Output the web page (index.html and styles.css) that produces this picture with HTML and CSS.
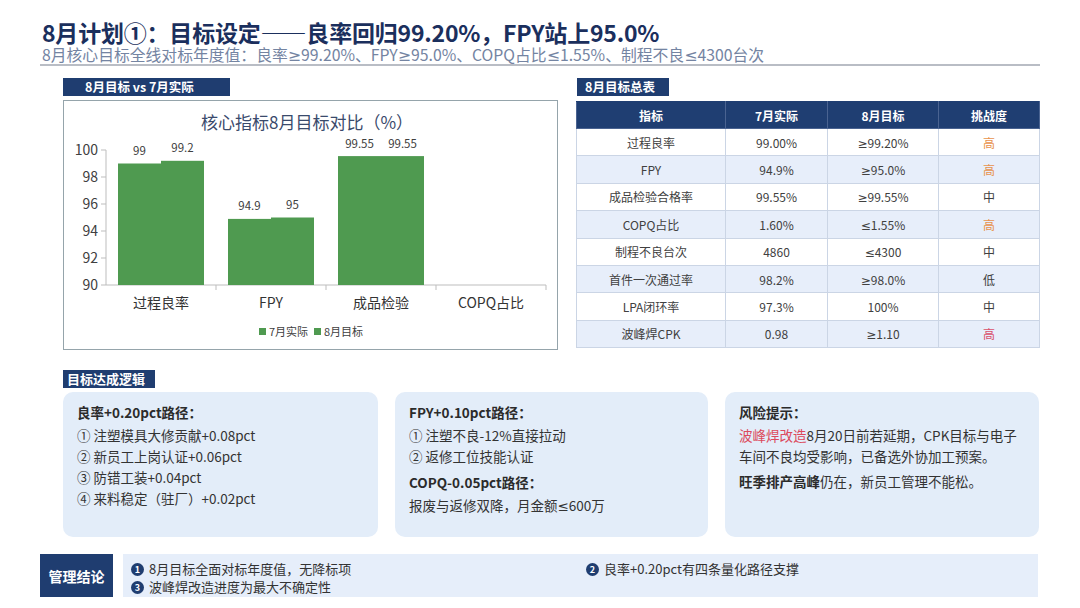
FILE: index.html
```html
<!DOCTYPE html>
<html lang="zh-CN">
<head>
<meta charset="utf-8">
<title>8月计划①：目标设定</title>
<link rel="stylesheet" href="styles.css">
</head>
<body>
<div class="page">
  <header class="header">
    <h1 class="title">8月计划①：目标设定——良率回归99.20%，FPY站上95.0%</h1>
    <p class="subtitle">8月核心目标全线对标年度值：良率<span class="op">≥</span>99.20%、FPY<span class="op">≥</span>95.0%、COPQ占比<span class="op">≤</span>1.55%、制程不良<span class="op">≤</span>4300台次</p>
  </header>

  <section class="top">
    <div class="col">
      <div class="tag tag-chart">8月目标 vs 7月实际</div>
      <div class="chart-box">
        <svg class="chart" width="495" height="248" viewBox="0 0 495 248">
          <text class="c-title" x="243" y="28" text-anchor="middle">核心指标8月目标对比（%）</text>
          <g class="grid-axis">
            <line x1="42" y1="49" x2="42" y2="184"/>
            <line x1="37" y1="49" x2="42" y2="49"/>
            <line x1="37" y1="76" x2="42" y2="76"/>
            <line x1="37" y1="103" x2="42" y2="103"/>
            <line x1="37" y1="130" x2="42" y2="130"/>
            <line x1="37" y1="157" x2="42" y2="157"/>
            <line x1="37" y1="184" x2="42" y2="184"/>
            <line x1="42" y1="184" x2="482" y2="184"/>
            <line x1="152" y1="184" x2="152" y2="189"/>
            <line x1="262" y1="184" x2="262" y2="189"/>
            <line x1="372" y1="184" x2="372" y2="189"/>
            <line x1="482" y1="184" x2="482" y2="189"/>
          </g>
          <g class="y-labels" text-anchor="end">
            <text x="34" y="54">100</text>
            <text x="34" y="81">98</text>
            <text x="34" y="108">96</text>
            <text x="34" y="135">94</text>
            <text x="34" y="162">92</text>
            <text x="34" y="189">90</text>
          </g>
          <g class="bars">
            <rect x="54" y="62.5" width="43" height="121.5"/>
            <rect x="97" y="59.8" width="43" height="124.2"/>
            <rect x="164" y="117.9" width="43" height="66.1"/>
            <rect x="207" y="116.5" width="43" height="67.5"/>
            <rect x="274" y="55.1" width="43" height="128.9"/>
            <rect x="317" y="55.1" width="43" height="128.9"/>
          </g>
          <g class="d-labels" text-anchor="middle">
            <text x="75.5" y="54">99</text>
            <text x="118.5" y="51">99.2</text>
            <text x="185.5" y="109">94.9</text>
            <text x="228.5" y="108">95</text>
            <text x="295.5" y="47">99.55</text>
            <text x="338.5" y="47">99.55</text>
          </g>
          <g class="x-labels" text-anchor="middle">
            <text x="97" y="207">过程良率</text>
            <text x="207" y="207">FPY</text>
            <text x="317" y="207">成品检验</text>
            <text x="427" y="207">COPQ占比</text>
          </g>
          <g class="legend">
            <rect x="195" y="227" width="7" height="7"/>
            <text x="205" y="235">7月实际</text>
            <rect x="250" y="227" width="7" height="7"/>
            <text x="260" y="235">8月目标</text>
          </g>
        </svg>
      </div>
    </div>

    <div class="col">
      <div class="tag tag-table">8月目标总表</div>
      <table class="targets">
        <colgroup>
          <col class="w1"><col class="w2"><col class="w3"><col class="w4">
        </colgroup>
        <thead>
          <tr><th>指标</th><th>7月实际</th><th>8月目标</th><th>挑战度</th></tr>
        </thead>
        <tbody>
          <tr><td>过程良率</td><td>99.00%</td><td><span class="op">≥</span>99.20%</td><td class="hi">高</td></tr>
          <tr><td>FPY</td><td>94.9%</td><td><span class="op">≥</span>95.0%</td><td class="hi">高</td></tr>
          <tr><td>成品检验合格率</td><td>99.55%</td><td><span class="op">≥</span>99.55%</td><td>中</td></tr>
          <tr><td>COPQ占比</td><td>1.60%</td><td><span class="op">≤</span>1.55%</td><td class="hi">高</td></tr>
          <tr><td>制程不良台次</td><td>4860</td><td><span class="op">≤</span>4300</td><td>中</td></tr>
          <tr><td>首件一次通过率</td><td>98.2%</td><td><span class="op">≥</span>98.0%</td><td>低</td></tr>
          <tr><td>LPA闭环率</td><td>97.3%</td><td>100%</td><td>中</td></tr>
          <tr><td>波峰焊CPK</td><td>0.98</td><td><span class="op">≥</span>1.10</td><td class="hi-red">高</td></tr>
        </tbody>
      </table>
    </div>
  </section>

  <section class="logic">
    <div class="tag tag-logic">目标达成逻辑</div>
    <div class="cards">
      <div class="card">
        <p class="c-head">良率+0.20pct路径：</p>
        <p>① 注塑模具大修贡献+0.08pct</p>
        <p>② 新员工上岗认证+0.06pct</p>
        <p>③ 防错工装+0.04pct</p>
        <p>④ 来料稳定（驻厂）+0.02pct</p>
      </div>
      <div class="card">
        <p class="c-head">FPY+0.10pct路径：</p>
        <p>① 注塑不良-12%直接拉动</p>
        <p>② 返修工位技能认证</p>
        <p class="c-head c-head-2">COPQ-0.05pct路径：</p>
        <p>报废与返修双降，月金额<span class="op">≤</span>600万</p>
      </div>
      <div class="card">
        <p class="c-head">风险提示：</p>
        <p><span class="red">波峰焊改造</span>8月20日前若延期，CPK目标与电子车间不良均受影响，已备选外协加工预案。</p>
        <p class="gap"><b>旺季排产高峰</b>仍在，新员工管理不能松。</p>
      </div>
    </div>
  </section>

  <section class="conclusion">
    <div class="c-label">管理结论</div>
    <div class="c-strip">
      <div class="c-item"><span class="num">1</span>8月目标全面对标年度值，无降标项</div>
      <div class="c-item"><span class="num">2</span>良率+0.20pct有四条量化路径支撑</div>
      <div class="c-item"><span class="num">3</span>波峰焊改造进度为最大不确定性</div>
    </div>
  </section>
</div>
</body>
</html>
```

FILE: styles.css
```css
* { box-sizing: border-box; }

html, body {
  margin: 0;
  padding: 0;
  background: #ffffff;
}

body {
  width: 1080px;
  height: 608px;
  overflow: hidden;
  font-family: "Noto Sans CJK SC", "Noto Sans", sans-serif;
  color: #333333;
}

p { margin: 0; }

.op {
  font-family: "Noto Sans", "DejaVu Sans", sans-serif;
  line-height: 1;
}

.page {
  padding: 18px 40px 0 40px;
}

.header {
  border-bottom: 2px solid #b9bdc5;
}

.title {
  margin: 0 0 0 2px;
  font-size: 23px;
  line-height: 28px;
  height: 28px;
  font-weight: 700;
  color: #1b2f5d;
  letter-spacing: -0.2px;
}

.subtitle {
  margin: 0 0 0 2px;
  font-size: 15.8px;
  line-height: 18px;
  height: 18px;
  color: #7484a2;
}

.top {
  display: grid;
  grid-template-columns: 495px 463px;
  column-gap: 18px;
  margin: 12px 0 0 23px;
}

.tag {
  height: 18px;
  line-height: 18px;
  background: #1f3d70;
  color: #ffffff;
  font-weight: 700;
  font-size: 12.5px;
}

.tag-chart {
  width: 167px;
  padding-left: 22px;
}

.tag-table {
  width: 92px;
  padding-left: 8px;
  margin-left: 1px;
}

.tag-logic {
  width: 92px;
  padding-left: 4px;
  font-size: 13px;
}

.chart-box {
  margin-top: 4px;
  height: 250px;
  border: 1px solid #95a4ab;
}

.chart {
  display: block;
}

.c-title {
  font-size: 17px;
  fill: #3a4a6c;
}

.grid-axis line {
  stroke: #bdbdbd;
  stroke-width: 1;
}

.y-labels text {
  font-size: 14px;
  fill: #404040;
}

.bars rect {
  fill: #4f9a50;
}

.d-labels text {
  font-size: 11.5px;
  fill: #404040;
}

.x-labels text {
  font-size: 14px;
  fill: #333333;
}

.legend rect {
  fill: #4f9a50;
}

.legend text {
  font-size: 11px;
  fill: #404040;
}

.targets {
  margin-top: 5px;
  width: 463px;
  border-collapse: collapse;
  table-layout: fixed;
  font-size: 12px;
}

.w1 { width: 149px; }
.w2 { width: 102px; }
.w3 { width: 111px; }
.w4 { width: 101px; }

.targets th {
  height: 27px;
  padding: 0;
  background: #1f3e72;
  color: #ffffff;
  font-weight: 700;
  border: 1px solid #4a6391;
  border-top-color: #1f3e72;
}

.targets td {
  height: 27.4px;
  padding: 0;
  text-align: center;
  color: #404040;
  border: 1px solid #cbd5e5;
}

.targets tbody tr:nth-child(even) td {
  background: #e7eefa;
}

.targets td.hi { color: #e8924c; }
.targets td.hi-red { color: #d9506a; }

.logic {
  margin: 20px 0 0 23px;
}

.cards {
  margin-top: 4px;
  display: grid;
  grid-template-columns: 315px 313px 314px;
  column-gap: 17px;
}

.card {
  height: 145px;
  background: #e3edf9;
  border-radius: 10px;
  padding: 10px 14px 0 14px;
  font-size: 13.5px;
  line-height: 21px;
  color: #333333;
}

.c-head {
  font-weight: 700;
  color: #2b2b2b;
  margin-bottom: 2px;
}

.c-head-2 {
  margin-top: 5px;
}

.gap {
  margin-top: 4px;
}

.red {
  color: #dc4a5c;
}

.card b {
  font-weight: 700;
  color: #2b2b2b;
}

.conclusion {
  margin-top: 17px;
  display: flex;
  column-gap: 10px;
  width: 998px;
}

.c-label {
  width: 73px;
  height: 43px;
  background: #1f3d70;
  color: #ffffff;
  font-weight: 700;
  font-size: 14px;
  display: flex;
  align-items: center;
  justify-content: center;
}

.c-strip {
  flex: 1;
  height: 43px;
  background: #e6eefa;
  padding: 6px 0 0 8px;
  display: grid;
  grid-template-columns: 455px 1fr;
  grid-auto-rows: 18px;
  font-size: 13px;
  color: #333333;
}

.c-item {
  display: flex;
  align-items: center;
  line-height: 18px;
}

.num {
  width: 13px;
  height: 13px;
  border-radius: 50%;
  background: #1f3d70;
  color: #ffffff;
  font-size: 9px;
  font-weight: 700;
  line-height: 13px;
  text-align: center;
  margin-right: 5px;
  flex: none;
}
```
